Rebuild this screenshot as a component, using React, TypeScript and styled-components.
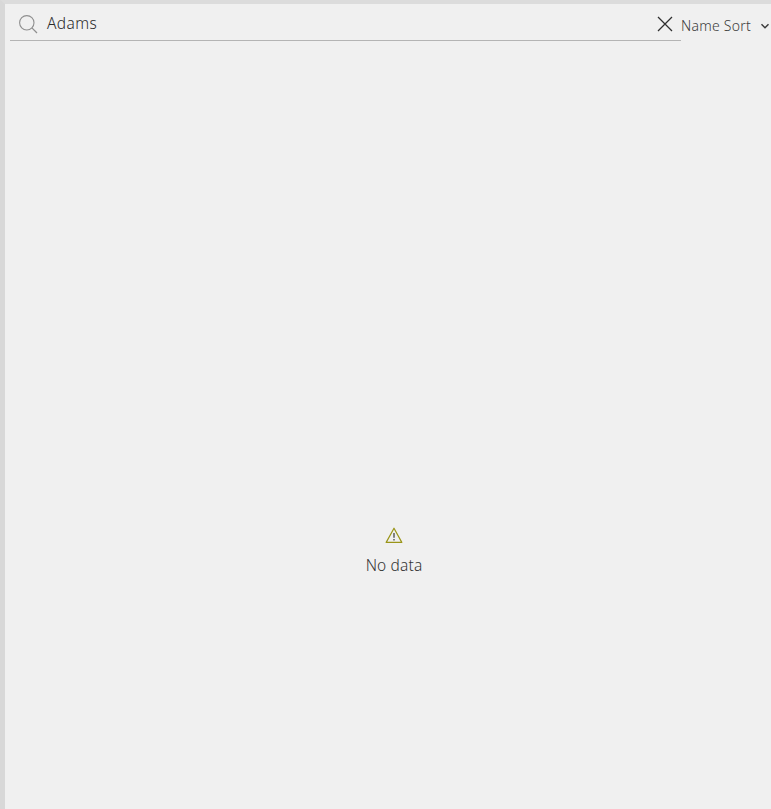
import React from "react";
import styled, { createGlobalStyle } from "styled-components";

const Global = createGlobalStyle`
  html, body { margin: 0; padding: 0; height: 100%; background: #f0f0f0; }
  #root { height: 100%; }
`;

const Page = styled.div`
  box-sizing: border-box;
  width: 771px;
  height: 809px;
  overflow: hidden;
  display: flex;
  flex-direction: column;
  background: #f0f0f0;
  border-top: 4px solid #dcdcdc;
  border-left: 5px solid #d8d8d8;
  font-family: "Noto Sans", Lato, sans-serif;
  color: #323232;
`;

const Toolbar = styled.div`
  display: flex;
  align-items: flex-start;
  padding-left: 5px;
  height: 37px;
  flex: none;
`;

const SearchBox = styled.div`
  box-sizing: border-box;
  width: 671px;
  height: 37px;
  display: flex;
  align-items: center;
  padding: 0 8px 0 8px;
  border-bottom: 1px solid #b4b4b4;
`;

const SearchIcon = styled.svg`
  width: 20px;
  height: 20px;
  flex: none;
  margin-top: 4px;
  fill: none;
  stroke: #8f8f8f;
  stroke-width: 1.1;
`;

const SearchText = styled.span`
  flex: 1;
  margin-left: 9px;
  margin-top: 1px;
  font-size: 15.5px;
  font-weight: 300;
  line-height: 20px;
  letter-spacing: 0.4px;
  color: #2b2b2b;
`;

const ClearIcon = styled.svg`
  width: 16px;
  height: 16px;
  flex: none;
  margin-top: 4px;
  fill: none;
  stroke: #2f2f2f;
  stroke-width: 1.3;
`;

const SortControl = styled.div`
  display: flex;
  align-items: center;
  height: 42px;
  font-size: 14px;
  font-weight: 300;
  letter-spacing: 0.25px;
  color: #3c3c3c;
  white-space: nowrap;
`;

const Chevron = styled.svg`
  width: 10px;
  height: 10px;
  margin-left: 9px;
  margin-top: 1px;
  fill: none;
  stroke: #3a3a3a;
  stroke-width: 1.4;
`;

const Body = styled.div`
  flex: 1;
  display: flex;
  flex-direction: column;
  align-items: center;
  padding-top: 485px;
  padding-left: 12px;
`;

const WarnIcon = styled.svg`
  width: 18px;
  height: 18px;
  display: block;
  fill: none;
  stroke: #9a9518;
  stroke-width: 1.2;
`;

const Message = styled.div`
  margin-top: 9px;
  font-size: 15.5px;
  font-weight: 300;
  line-height: 24px;
  letter-spacing: 0.15px;
  color: #333333;
`;

export default function App() {
  return (
    <Page>
      <Global />
      <Toolbar>
        <SearchBox>
          <SearchIcon viewBox="0 0 20 20">
            <circle cx="8.8" cy="8.8" r="7.2" />
            <path d="M13.9 13.9 L19 19" strokeWidth="1.3" />
          </SearchIcon>
          <SearchText>Adams</SearchText>
          <ClearIcon viewBox="0 0 16 16">
            <path d="M1 1 L15 15 M15 1 L1 15" />
          </ClearIcon>
        </SearchBox>
        <SortControl>
          Name Sort
          <Chevron viewBox="0 0 10 10">
            <path d="M1.5 3.2 L5 6.8 L8.5 3.2" />
          </Chevron>
        </SortControl>
      </Toolbar>
      <Body>
        <WarnIcon viewBox="0 0 18 18">
          <path d="M9 2.2 L16.8 16.4 H1.2 Z" strokeLinejoin="round" />
          <path d="M9 7 V11.8" stroke="#444" strokeWidth="1.3" />
          <path d="M9 13 V14.5" stroke="#444" strokeWidth="1.3" />
        </WarnIcon>
        <Message>No data</Message>
      </Body>
    </Page>
  );
}
